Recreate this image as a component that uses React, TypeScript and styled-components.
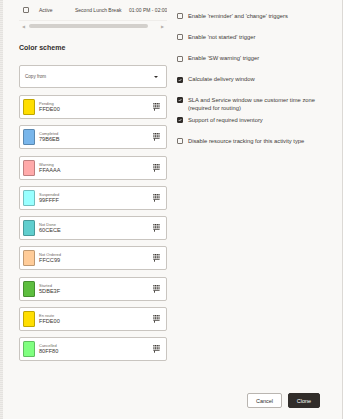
import React from "react";
import styled, { createGlobalStyle } from "styled-components";

const Global = createGlobalStyle`
  html, body { margin: 0; padding: 0; background: #f9f8f6; }
  body { font-family: "Liberation Sans", Arial, sans-serif; color: #312d2a; }
  * { box-sizing: border-box; }
`;

const Page = styled.div`
  width: 347px;
  height: 419px;
  display: flex;
  overflow: hidden;
  background: #f9f8f6;
`;

const LeftStrip = styled.div`
  width: 3px;
  flex: none;
  background: repeating-linear-gradient(0deg, #e4e2df 0 1px, #efedea 1px 2px);
`;

const RightEdge = styled.div`
  width: 5px;
  flex: none;
  border-left: 1px solid #dcd9d5;
  background: #ffffff;
`;

const Content = styled.div`
  flex: 1;
  display: grid;
  grid-template-columns: 148px 1fr;
  column-gap: 9px;
  padding-left: 16px;
  min-width: 0;
`;

const LeftCol = styled.div`
  display: flex;
  flex-direction: column;
  min-width: 0;
`;

const TableRow = styled.div`
  height: 21px;
  display: flex;
  align-items: center;
  padding-left: 4px;
  font-size: 5px;
  color: #4a4540;
  white-space: nowrap;
  overflow: hidden;
  border-bottom: 1px solid #efedea;
`;

const Cell = styled.span<{ $w: number }>`
  flex: none;
  width: ${(p) => p.$w}px;
`;

const Box = styled.span<{ $checked?: boolean }>`
  flex: none;
  width: 6px;
  height: 6px;
  border: 0.7px solid ${(p) => (p.$checked ? "#312d2a" : "#7a746e")};
  border-radius: 1px;
  background: ${(p) => (p.$checked ? "#312d2a" : "transparent")};
  display: inline-flex;
  align-items: center;
  justify-content: center;
`;

const ScrollBar = styled.div`
  height: 10px;
  display: flex;
  align-items: center;
  padding-left: 3px;
  gap: 3px;
`;

const Arrow = styled.span`
  font-size: 4px;
  color: #b5b0ab;
  width: 4px;
`;

const Thumb = styled.div`
  width: 119px;
  height: 4px;
  border-radius: 2px;
  background: #d3d0cc;
  margin-right: 10px;
`;

const Title = styled.div`
  margin-top: 12px;
  font-size: 7px;
  line-height: 10px;
  font-weight: 700;
  color: #312d2a;
`;

const Select = styled.div`
  margin-top: 12px;
  height: 23px;
  border: 1px solid #c9c5c0;
  border-radius: 2px;
  background: #ffffff;
  display: flex;
  align-items: center;
  justify-content: space-between;
  padding: 0 8px 0 5px;
  font-size: 4.6px;
  color: #5c5650;
`;

const Caret = styled.span`
  width: 0;
  height: 0;
  border-left: 2px solid transparent;
  border-right: 2px solid transparent;
  border-top: 2.5px solid #312d2a;
`;

const List = styled.div`
  margin-top: 7px;
  display: flex;
  flex-direction: column;
  gap: 6.3px;
`;

const ColorItem = styled.div`
  height: 24px;
  border: 1px solid #c9c5c0;
  border-radius: 2px;
  background: #ffffff;
  display: flex;
  align-items: center;
  padding: 0 6px 0 3px;
`;

const Swatch = styled.span<{ $c: string }>`
  flex: none;
  width: 12px;
  height: 16px;
  border-radius: 1.5px;
  background: #${(p) => p.$c};
  border: 0.7px solid rgba(0, 0, 0, 0.25);
`;

const ColorText = styled.div`
  flex: 1;
  margin-left: 4px;
  display: flex;
  flex-direction: column;
`;

const ColorLabel = styled.span`
  font-size: 4px;
  line-height: 5px;
  color: #6f6963;
`;

const ColorValue = styled.span`
  font-size: 5.6px;
  line-height: 7px;
  color: #3a3631;
`;

const RightCol = styled.div`
  display: flex;
  flex-direction: column;
  padding-top: 11.75px;
  padding-right: 22px;
  padding-bottom: 11px;
  min-width: 0;
`;

const Option = styled.label<{ $gap: number }>`
  display: flex;
  align-items: flex-start;
  gap: 5px;
  margin-top: ${(p) => p.$gap}px;
  padding-left: 1px;
  font-size: 5.8px;
  line-height: 8.4px;
  color: #3e3a36;
  & > span:first-child {
    margin-top: 1.2px;
  }
`;

const Footer = styled.div`
  margin-top: auto;
  display: flex;
  justify-content: flex-end;
  gap: 6px;
`;

const Button = styled.button<{ $primary?: boolean; $w: number }>`
  width: ${(p) => p.$w}px;
  height: 15px;
  padding: 0;
  border-radius: 2px;
  font-family: "Liberation Sans", Arial, sans-serif;
  font-size: 5.5px;
  border: 1px solid ${(p) => (p.$primary ? "#312d2a" : "#b9b5b0")};
  background: ${(p) => (p.$primary ? "#312d2a" : "#ffffff")};
  color: ${(p) => (p.$primary ? "#ffffff" : "#312d2a")};
`;

const Check = () => (
  <svg width="4" height="4" viewBox="0 0 8 8">
    <path d="M1.5 4.2 L3.3 6 L6.8 2" stroke="#fff" strokeWidth="1.4" fill="none" />
  </svg>
);

const PickerIcon = () => (
  <svg width="7" height="8" viewBox="0 0 7 8">
    <g fill="#3a3631">
      {[0, 1.6, 3.2].map((y) =>
        [0.3, 2, 3.7, 5.4].map((x) => <rect key={`${x}-${y}`} x={x} y={y} width="1.2" height="1.1" />)
      )}
      <rect x="0.3" y="4.9" width="6.3" height="0.8" />
      <rect x="1" y="5.7" width="0.9" height="2" />
    </g>
  </svg>
);

const colors = [
  ["Pending", "FFDE00"],
  ["Completed", "79B6EB"],
  ["Warning", "FFAAAA"],
  ["Suspended", "99FFFF"],
  ["Not Done", "60CECE"],
  ["Not Ordered", "FFCC99"],
  ["Started", "5DBE3F"],
  ["En route", "FFDE00"],
  ["Cancelled", "80FF80"],
];

const options: { text: React.ReactNode; checked?: boolean; gap: number }[] = [
  { text: "Enable 'reminder' and 'change' triggers", gap: 0 },
  { text: "Enable 'not started' trigger", gap: 12.9 },
  { text: "Enable 'SW warning' trigger", gap: 12.9 },
  { text: "Calculate delivery window", checked: true, gap: 12.6 },
  {
    text: (
      <>
        SLA and Service window use customer time zone
        <br />
        (required for routing)
      </>
    ),
    checked: true,
    gap: 12.3,
  },
  { text: "Support of required inventory", checked: true, gap: 3.3 },
  { text: "Disable resource tracking for this activity type", gap: 12.6 },
];

export default function App() {
  return (
    <Page>
      <Global />
      <LeftStrip />
      <Content>
        <LeftCol>
          <TableRow>
            <Cell $w={16}>
              <Box />
            </Cell>
            <Cell $w={36}>Active</Cell>
            <Cell $w={54}>Second Lunch Break</Cell>
            <Cell $w={50}>01:00 PM - 02:00 PM</Cell>
          </TableRow>
          <ScrollBar>
            <Arrow>◀</Arrow>
            <Thumb />
            <Arrow>▶</Arrow>
          </ScrollBar>
          <Title>Color scheme</Title>
          <Select>
            <span>Copy from</span>
            <Caret />
          </Select>
          <List>
            {colors.map(([label, value]) => (
              <ColorItem key={label + value}>
                <Swatch $c={value} />
                <ColorText>
                  <ColorLabel>{label}</ColorLabel>
                  <ColorValue>{value}</ColorValue>
                </ColorText>
                <PickerIcon />
              </ColorItem>
            ))}
          </List>
        </LeftCol>
        <RightCol>
          {options.map((o, i) => (
            <Option key={i} $gap={o.gap}>
              <Box $checked={o.checked}>{o.checked && <Check />}</Box>
              <span>{o.text}</span>
            </Option>
          ))}
          <Footer>
            <Button $w={35}>Cancel</Button>
            <Button $w={32} $primary>
              Clone
            </Button>
          </Footer>
        </RightCol>
      </Content>
      <RightEdge />
    </Page>
  );
}
